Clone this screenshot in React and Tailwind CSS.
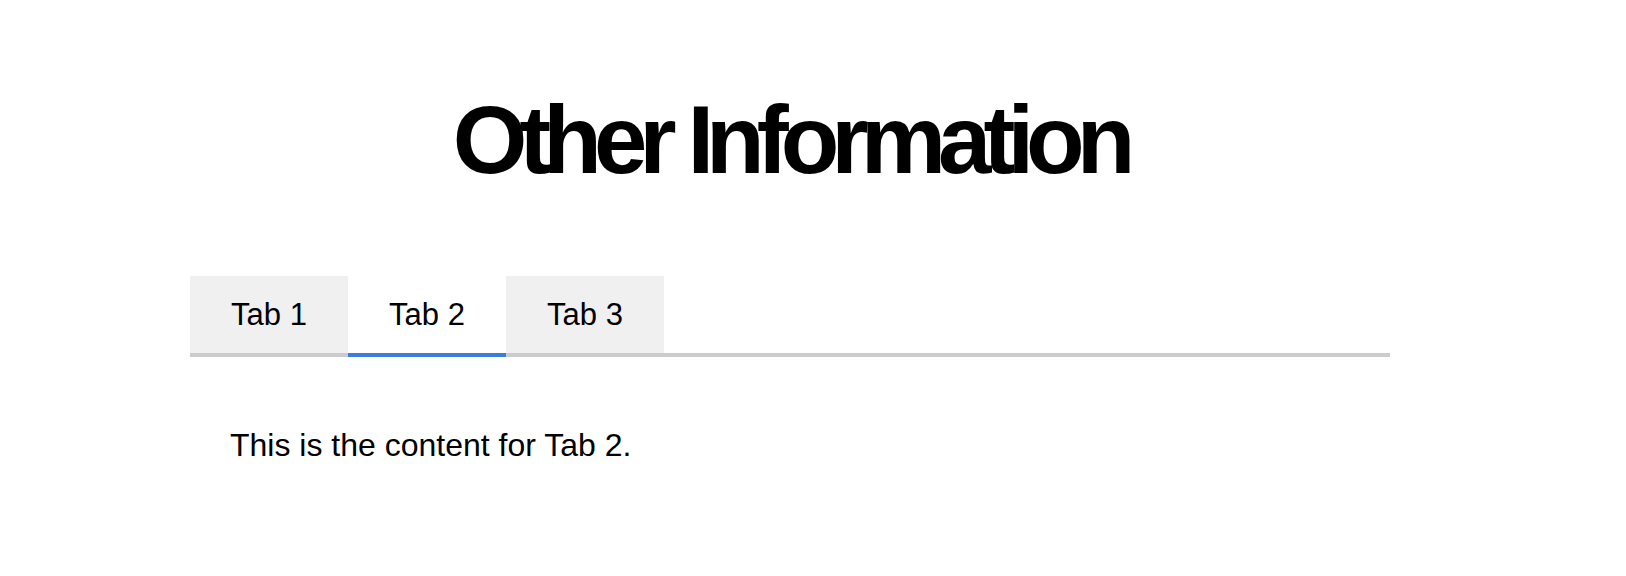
import React, { useState } from "react";

export default function App() {
  const [active, setActive] = useState(1);
  const tabs = ["Tab 1", "Tab 2", "Tab 3"];
  return (
    <div
      className="min-h-screen bg-white text-black"
      style={{ fontFamily: '"Liberation Sans", Arial, sans-serif' }}
    >
      <div className="ml-[190px] w-[1200px] pt-[85px]">
        <h1 className="text-center text-[96px] font-bold leading-[110px] tracking-[-8px]">
          Other Information
        </h1>
        <div className="mt-[81px] flex border-b-4 border-[#cccccc]">
          {tabs.map((t, i) => (
            <button
              key={t}
              onClick={() => setActive(i)}
              className={
                i === active
                  ? "-mb-1 w-[158px] border-b-4 border-[#3b7ddd] bg-white py-[21px] text-center text-[31px] leading-[35px]"
                  : "w-[158px] bg-[#f0f0f0] py-[21px] text-center text-[31px] leading-[35px]"
              }
            >
              {t}
            </button>
          ))}
        </div>
        <div className="mt-[30px] p-[40px] text-[32px] leading-[36px]">
          This is the content for Tab {active + 1}.
        </div>
      </div>
    </div>
  );
}
